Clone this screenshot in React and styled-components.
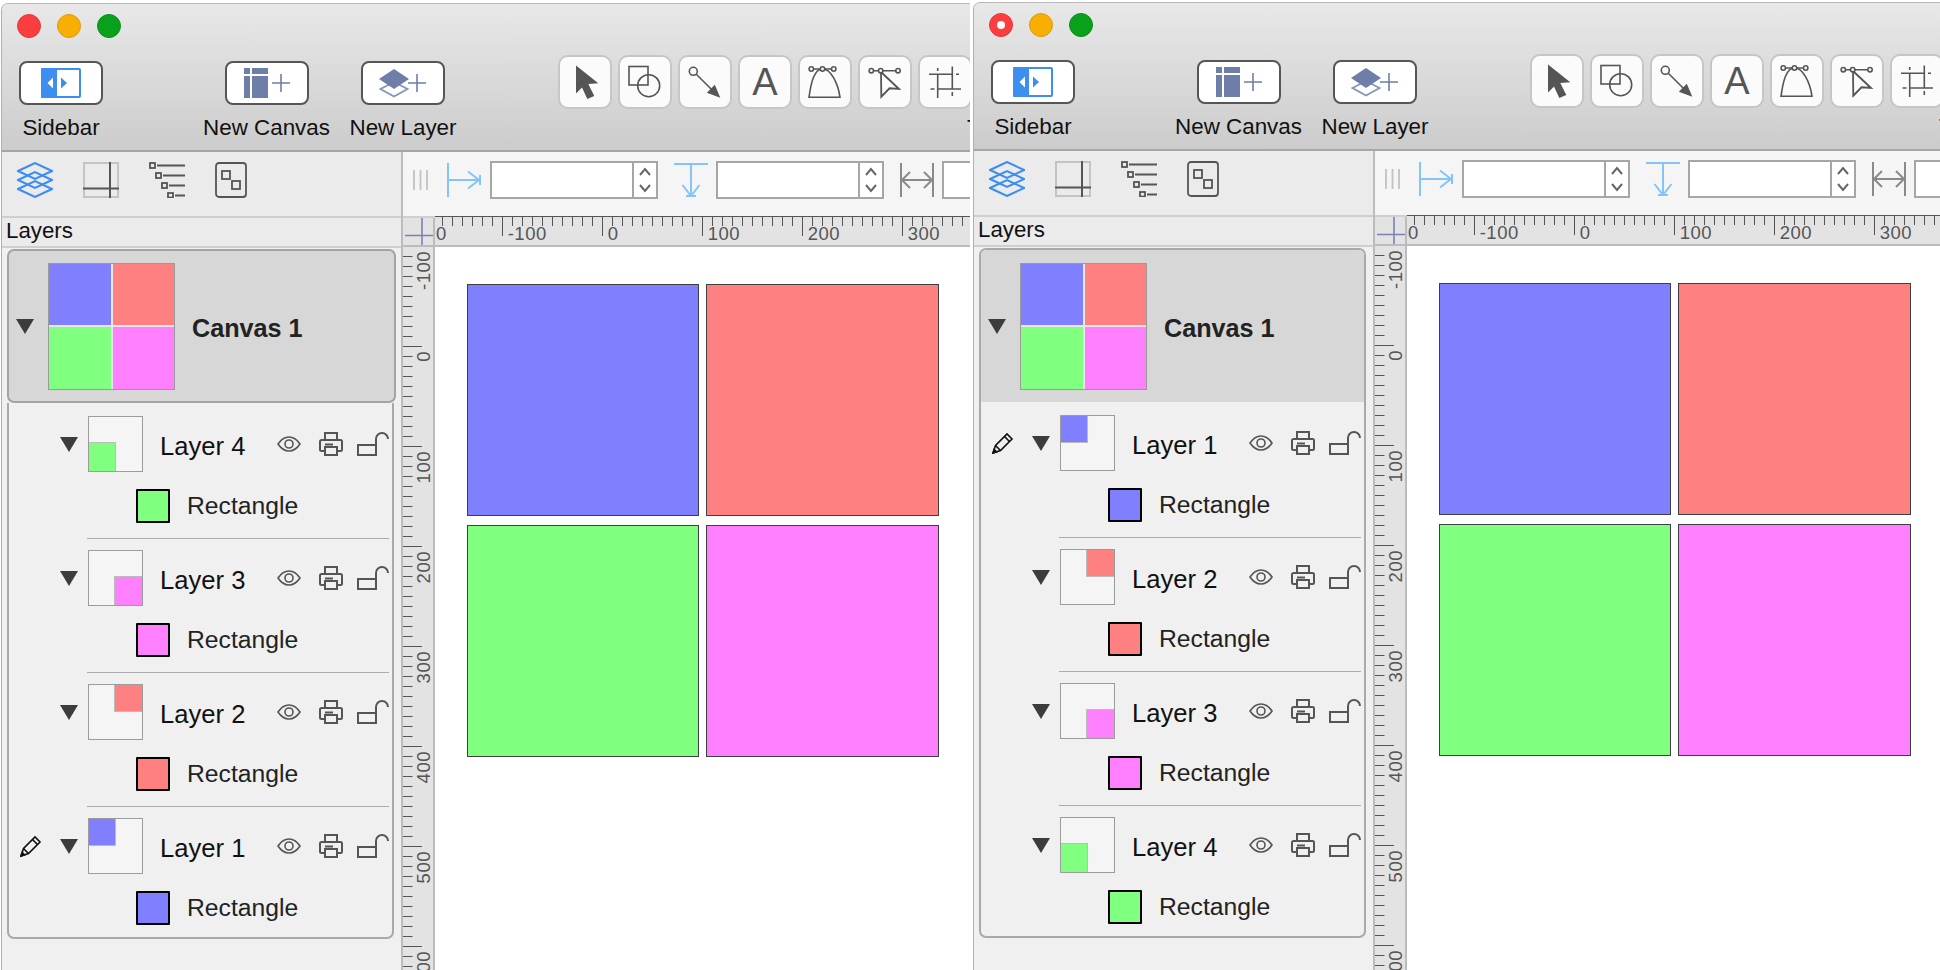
import React from "react";
import styled, { createGlobalStyle } from "styled-components";

const FONT = `"Liberation Sans", Arial, sans-serif`;
const BLUE = "#8080ff";
const RED = "#ff8080";
const GREEN = "#80ff80";
const PINK = "#ff80ff";
const ICON = "#555";

const Global = createGlobalStyle`
  html, body { margin: 0; padding: 0; background: #fff; overflow: hidden; }
  #root { width: 1940px; height: 970px; }
`;

const Page = styled.div`
  display: flex;
  width: 1940px;
  height: 970px;
  overflow: hidden;
  font-family: ${FONT};
`;

const Window = styled.div`
  display: flex;
  flex-direction: column;
  flex: none;
  width: ${(p) => p.$width}px;
  height: ${(p) => 970 - p.$top}px;
  margin: ${(p) => p.$top}px ${(p) => p.$after}px 0 1px;
  border-top: 1px solid #b8b8b8;
  border-left: 1px solid #b0b0b0;
  border-top-left-radius: 7px;
  overflow: hidden;
  background: #f0f0f0;
`;

const TitleBar = styled.div`
  flex: none;
  height: 136px;
  padding: 10px 0 0 15px;
  background: linear-gradient(#e8e8e8, #cccccc);
  border-bottom: 2px solid #a6a6a6;
`;

const Lights = styled.div`
  display: flex;
  gap: 16px;
`;

const Light = styled.div`
  display: flex;
  align-items: center;
  justify-content: center;
  width: 24px;
  height: 24px;
  border-radius: 50%;
  box-sizing: border-box;
  border: 1px solid ${(p) => p.$edge};
  background: ${(p) => p.$color};
`;

const Dot = styled.div`
  width: 8px;
  height: 8px;
  border-radius: 50%;
  background: #fff;
`;

const Toolbar = styled.div`
  display: flex;
  align-items: flex-start;
  margin: 17px 0 0 2px;
`;

const ToolItem = styled.div`
  flex: none;
  display: flex;
  flex-direction: column;
  align-items: center;
  width: ${(p) => p.$width}px;
  margin: 6px 0 0 ${(p) => p.$left}px;
`;

const BigButton = styled.div`
  display: flex;
  align-items: center;
  justify-content: center;
  width: 84px;
  height: 44px;
  box-sizing: border-box;
  border: 2px solid #565656;
  border-radius: 8px;
  background: #fff;
`;

const ToolLabel = styled.div`
  margin-top: 10px;
  font-size: 22.4px;
  line-height: 26px;
  color: #111;
  white-space: nowrap;
`;

const ToolGroup = styled.div`
  flex: none;
  margin-left: 101px;
`;

const ToolRow = styled.div`
  display: flex;
  gap: 6px;
`;

const ClippedLabel = styled(ToolLabel)`
  margin: 6px 0 0 ${(p) => p.$left}px;
  width: 20px;
`;

const ToolButton = styled.div`
  flex: none;
  display: flex;
  align-items: center;
  justify-content: center;
  width: 54px;
  height: 54px;
  box-sizing: border-box;
  border: 2px solid #c6c6c6;
  border-radius: 10px;
  background: #fbfbfb;
  color: ${ICON};
  font-size: 38px;
  line-height: 1;
`;

const Body = styled.div`
  flex: 1;
  display: flex;
  min-height: 0;
`;

const Sidebar = styled.div`
  flex: none;
  display: flex;
  flex-direction: column;
  width: 399px;
  border-right: 2px solid #bcbcbc;
`;

const SideTools = styled.div`
  flex: none;
  display: flex;
  align-items: flex-start;
  gap: 30px;
  box-sizing: border-box;
  height: 66px;
  padding: 10px 0 0 15px;
  background: #ebebeb;
  border-bottom: 2px solid #cfcfcf;
`;

const LayersHeader = styled.div`
  flex: none;
  box-sizing: border-box;
  height: 30px;
  padding-left: 4px;
  background: #ebebeb;
  border-bottom: 2px solid #cfcfcf;
  font-size: 22.3px;
  line-height: 26px;
  color: #111;
`;

const ListFrame = styled.div`
  flex: none;
  box-sizing: border-box;
  width: ${(p) => (p.$split ? 389 : 387)}px;
  margin: 1px 0 0 5px;
  ${(p) =>
    !p.$split &&
    `
    border: 2px solid #a9a9a9;
    border-radius: 7px;
    overflow: hidden;
  `}
`;

const CanvasRow = styled.div`
  display: flex;
  align-items: center;
  box-sizing: border-box;
  height: ${(p) => (p.$split ? 154 : 152)}px;
  padding-left: 7px;
  background: #d7d7d7;
  ${(p) =>
    p.$split &&
    `
    border: 2px solid #a3a3a3;
    border-radius: 7px;
  `}
`;

const Triangle = styled.div`
  flex: none;
  width: 0;
  height: 0;
  border-left: 9px solid transparent;
  border-right: 9px solid transparent;
  border-top: 15px solid #3c3c3c;
`;

const CanvasThumb = styled.div`
  flex: none;
  display: grid;
  grid-template-columns: 1fr 1fr;
  grid-template-rows: 1fr 1fr;
  gap: 2px;
  box-sizing: border-box;
  width: 127px;
  height: 127px;
  margin-left: 14px;
  border: 1px solid #9a9a9a;
  background: #e8e8e8;
`;

const Fill = styled.div`
  background: ${(p) => p.$color};
`;

const CanvasName = styled.div`
  margin: 4px 0 0 17px;
  font-size: 25.2px;
  font-weight: 700;
  color: #222;
  white-space: nowrap;
`;

const LayerList = styled.div`
  box-sizing: border-box;
  padding: 13px 0 12px;
  ${(p) =>
    p.$split &&
    `
    width: 387px;
    border: 2px solid #a9a9a9;
    border-top: none;
    border-bottom-left-radius: 7px;
    border-bottom-right-radius: 7px;
  `}
`;

const LayerHead = styled.div`
  display: flex;
  align-items: center;
  height: 56px;
`;

const PencilSlot = styled.div`
  flex: none;
  display: flex;
  width: 22px;
  height: 22px;
  margin: 0 18px 0 11px;
`;

const LayerThumb = styled.div`
  flex: none;
  display: grid;
  grid-template-columns: 26px 1fr;
  grid-template-rows: 26px 1fr;
  box-sizing: border-box;
  width: 55px;
  height: 56px;
  margin-left: 10px;
  border: 1px solid #9c9c9c;
  background: #f5f5f5;
  overflow: hidden;
`;

const LayerCorner = styled.div`
  grid-column: ${(p) => p.$col};
  grid-row: ${(p) => p.$row};
  background: ${(p) => p.$color};
  box-shadow: 0 0 0 1px rgba(120, 120, 120, 0.45);
`;

const LayerName = styled.div`
  flex: none;
  width: 117px;
  margin: 4px 0 0 17px;
  font-size: 25.6px;
  color: #111;
  white-space: nowrap;
`;

const LayerIcons = styled.div`
  flex: none;
  display: flex;
  align-items: center;
  margin-top: -1px;
`;

const RowIcon = styled.svg`
  flex: none;
  display: block;
  margin-left: ${(p) => p.$left}px;
`;

const SubRow = styled.div`
  display: flex;
  align-items: center;
  height: 34px;
  margin-top: 17px;
  padding-left: 127px;
`;

const Swatch = styled.div`
  flex: none;
  box-sizing: border-box;
  width: 34px;
  height: 34px;
  border: 2px solid #000;
  border-radius: 1px;
  background: ${(p) => p.$color};
`;

const SubName = styled.div`
  margin-left: 17px;
  font-size: 24.7px;
  color: #222;
`;

const Divider = styled.div`
  height: 1px;
  margin: 15px 3px 11px 78px;
  background: #acacac;
`;

const Main = styled.div`
  flex: 1;
  display: flex;
  flex-direction: column;
  min-width: 0;
`;

const Inspector = styled.div`
  flex: none;
  display: flex;
  align-items: center;
  box-sizing: border-box;
  height: 66px;
  padding: 0 0 8px 10px;
  background: #f5f5f5;
  border-bottom: 2px solid #cfcfcf;
`;

const Glyph = styled.svg`
  flex: none;
  display: block;
  margin-left: ${(p) => p.$left || 0}px;
`;

const Field = styled.div`
  flex: none;
  display: flex;
  justify-content: flex-end;
  box-sizing: border-box;
  width: 168px;
  height: 38px;
  margin-left: 8px;
  border: 2px solid #a6a6a6;
  background: #fff;
`;

const Stepper = styled.div`
  display: flex;
  align-items: center;
  justify-content: center;
  width: 22px;
  border-left: 2px solid #a6a6a6;
`;

const RulerTop = styled.div`
  flex: none;
  display: flex;
  height: 29px;
`;

const Corner = styled.div`
  flex: none;
  box-sizing: border-box;
  width: 32px;
  background: #e3e3e3;
  border-right: 2px solid #bcbcbc;
  border-bottom: 2px solid #bcbcbc;
`;

const HorizontalStrip = styled.div`
  flex: 1;
  min-width: 0;
  overflow: hidden;
  box-sizing: border-box;
  height: 31px;
  margin-top: -2px;
  background: #e3e3e3;
  border-bottom: 2px solid #bcbcbc;
`;

const HorizontalTicks = styled.div`
  display: flex;
  width: 800px;
  height: 29px;
  margin-left: -33.3px;
`;

const HorizontalCell = styled.div`
  flex: none;
  box-sizing: border-box;
  width: 100px;
  padding: 8px 0 0 6px;
  background:
    linear-gradient(${ICON}, ${ICON}) 0 0 / 100% 1.4px no-repeat,
    linear-gradient(${ICON}, ${ICON}) 0 0 / 1.4px 20px no-repeat,
    repeating-linear-gradient(to right, ${ICON} 0 1.4px, transparent 1.4px 10px) 0 0 / 100% 10px no-repeat;
  font-size: 18.5px;
  line-height: 20px;
  letter-spacing: 0.5px;
  color: #555;
`;

const RulerBody = styled.div`
  flex: 1;
  display: flex;
  min-height: 0;
`;

const VerticalStrip = styled.div`
  flex: none;
  box-sizing: border-box;
  width: 32px;
  overflow: hidden;
  background: #e3e3e3;
  border-right: 2px solid #bcbcbc;
`;

const VerticalTicks = styled.div`
  margin-top: -1.3px;
`;

const VerticalCell = styled.div`
  display: flex;
  justify-content: flex-end;
  box-sizing: border-box;
  height: 100px;
  padding: 5px 1px 0 0;
  background:
    linear-gradient(${ICON}, ${ICON}) 0 0 / 19px 1.4px no-repeat,
    repeating-linear-gradient(to bottom, ${ICON} 0 1.4px, transparent 1.4px 10px) 0 0 / 9.5px 100% no-repeat;
`;

const VerticalLabel = styled.div`
  writing-mode: vertical-rl;
  transform: rotate(180deg);
  align-self: flex-start;
  font-size: 18.5px;
  line-height: 16px;
  letter-spacing: 0.5px;
  color: #555;
`;

const Canvas = styled.div`
  flex: 1;
  min-width: 0;
  box-sizing: border-box;
  padding: 36.5px 0 0 31.5px;
  background: #fff;
`;

const ShapeGrid = styled.div`
  display: grid;
  grid-template-columns: 232.6px 232.6px;
  grid-template-rows: 232px 232px;
  column-gap: 7.4px;
  row-gap: 9px;
`;

const Shape = styled.div`
  box-sizing: border-box;
  border: 1.5px solid #3f3f3f;
  background: ${(p) => p.$color};
`;

function SidebarIcon() {
  return (
    <svg width="40" height="30" viewBox="0 0 40 30">
      <rect x="1" y="1" width="38" height="28" fill="#fff" stroke="#3c8ef0" strokeWidth="2" rx="1" />
      <rect width="16" height="30" fill="#3c8ef0" rx="1" />
      <path d="M12 9.5v11L6.5 15z" fill="#fff" />
      <path d="M20 9.5v11l6-5.5z" fill="#3c8ef0" />
    </svg>
  );
}

function NewCanvasIcon() {
  return (
    <svg width="46" height="30" viewBox="0 0 46 30">
      <path d="M0 0h6v6H0zM8 0h16v6H8zM0 8h6v22H0zM8 8h16v22H8z" fill="#6d7ea8" />
      <path d="M28 15h18M37 6v18" stroke="#6d7ea8" strokeWidth="1.6" fill="none" />
    </svg>
  );
}

function NewLayerIcon() {
  return (
    <svg width="48" height="30" viewBox="0 0 48 30">
      <path d="M1.5 21L15 14l13.5 7L15 28.5z" fill="none" stroke="#8594b8" strokeWidth="1.8" />
      <path d="M0 11L15 1l15 10-15 10z" fill="#6d7ea8" />
      <path d="M29 15h18M38 6v18" stroke="#6d7ea8" strokeWidth="1.6" fill="none" />
    </svg>
  );
}

function ToolIcon({ kind }) {
  const line = { fill: "none", stroke: ICON, strokeWidth: 1.6 };
  return (
    <svg width="50" height="50" viewBox="2 2 50 50">
      {kind === "arrow" && <path d="M18 10.5l22.3 17.8-10 .7 6 12-7 3-5.3-11.5-6 6z" fill={ICON} />}
      {kind === "shapes" && (
        <g {...line}>
          <rect x="11" y="11.500" width="19" height="18.5" />
          <circle cx="30.7" cy="30.7" r="11" />
        </g>
      )}
      {kind === "line" && (
        <g>
          <circle cx="15.3" cy="16.3" r="4" {...line} />
          <path d="M18.3 19.3l17 17" {...line} />
          <path d="M42.3 42.7l-13.5-5 8-8z" fill={ICON} />
        </g>
      )}
      {kind === "curve" && (
        <g {...line}>
          <path d="M11 42.3C13 28 16 14 24.5 14 33 14 40 28 42 42.3z" />
          <path d="M15 14h19" />
          <circle cx="13.3" cy="14" r="2.2" fill="#fbfbfb" />
          <circle cx="24.5" cy="14" r="2.2" fill="#fbfbfb" />
          <circle cx="35.7" cy="14" r="2.2" fill="#fbfbfb" />
        </g>
      )}
      {kind === "edit" && (
        <g {...line}>
          <path d="M15 15.7h23" />
          <path d="M23 17l18 17-9.5-.7-8.2 8.4z" strokeWidth="1.8" />
          <circle cx="13.3" cy="15.7" r="2.2" fill="#fbfbfb" />
          <circle cx="22.7" cy="15.7" r="2.2" fill="#fbfbfb" />
          <circle cx="40" cy="15.7" r="2.2" fill="#fbfbfb" />
        </g>
      )}
      {kind === "crop" && (
        <path
          d="M11 19.3h23.5M38 19.3h3M12.5 34h4M19.7 34H43M19.7 13v3M19.7 19.3V43M34.3 11.5v22.5M34.3 37v4"
          {...line}
        />
      )}
    </svg>
  );
}

function LayersIcon() {
  return (
    <svg width="36" height="36" viewBox="0 0 36 36" fill="none" stroke="#3b8df5" strokeWidth="2">
      <path d="M1 9l17-8 17 8-17 8z" />
      <path d="M1 18l17-8 17 8-17 8z" />
      <path d="M1 27l17-8 17 8-17 8z" />
    </svg>
  );
}

function GridIcon() {
  return (
    <svg width="36" height="36" viewBox="0 0 36 36" fill="none">
      <rect x="1" y="1" width="34" height="34" stroke="#c4c4c4" strokeWidth="2" />
      <path d="M27 0v36M0 26.500h36" stroke={ICON} strokeWidth="2" />
    </svg>
  );
}

function OutlineIcon() {
  return (
    <svg width="36" height="36" viewBox="0 0 36 36" fill="none" stroke={ICON} strokeWidth="1.8">
      <rect x="1" y="1" width="5" height="5" />
      <rect x="7" y="11" width="5" height="5" />
      <rect x="13" y="21" width="5" height="5" />
      <rect x="19" y="31" width="5" height="4.500" />
      <path d="M8 3.500h28M14 13.500h22M20 23.500h16M26 33.500h10" />
    </svg>
  );
}

function SquaresIcon() {
  return (
    <svg width="32" height="36" viewBox="0 0 32 36" fill="none" stroke={ICON} strokeWidth="1.8">
      <rect x="1" y="1" width="30" height="34" rx="3" />
      <rect x="7" y="9" width="8" height="8" />
      <rect x="17" y="19" width="8" height="8" />
    </svg>
  );
}

function HandleIcon() {
  return (
    <Glyph width="15" height="20" viewBox="0 0 15 20" stroke="#c2c2c2" strokeWidth="1.8">
      <path d="M1 0v20M7.500 0v20M14 0v20" />
    </Glyph>
  );
}

function XIcon() {
  return (
    <Glyph $left={19} width="35" height="34" viewBox="0 0 35 34" fill="none" stroke="#85c4fb" strokeWidth="2">
      <path d="M1 0v34M1 17h32M33 12v10M21 8.500l11 8.500-11 8.500" />
    </Glyph>
  );
}

function YIcon() {
  return (
    <Glyph $left={16} width="34" height="34" viewBox="0 0 34 34" fill="none" stroke="#85c4fb" strokeWidth="2">
      <path d="M0 1h34M17 1v32M12 33h10M8.500 22l8.500 11 8.500-11" />
    </Glyph>
  );
}

function WidthIcon() {
  return (
    <Glyph $left={16} width="34" height="34" viewBox="0 0 34 34" fill="none" stroke="#8a8a8a" strokeWidth="2">
      <path d="M1 0v34M33 0v34M2 17h30M10 9l-8 8 8 8M24 9l8 8-8 8" />
    </Glyph>
  );
}

function Chevrons() {
  return (
    <svg width="14" height="28" viewBox="0 0 14 28" fill="none" stroke="#666" strokeWidth="2">
      <path d="M2 9l5-6 5 6M2 19l5 6 5-6" />
    </svg>
  );
}

function EyeIcon() {
  return (
    <RowIcon $left={0} width="24" height="16" viewBox="0 0 24 16" fill="none" stroke={ICON} strokeWidth="1.6">
      <path d="M1 8c3-4.500 7-7 11-7s8 2.500 11 7c-3 4.500-7 7-11 7S4 12.500 1 8z" />
      <circle cx="12" cy="8" r="4" />
    </RowIcon>
  );
}

function PrinterIcon() {
  return (
    <RowIcon $left={18} width="24" height="24" viewBox="0 0 24 24" fill="none" stroke={ICON} strokeWidth="2">
      <path d="M6 8V1h12v7" />
      <path d="M6 19H2.500A1.500 1.500 0 0 1 1 17.500v-8A1.500 1.500 0 0 1 2.500 8h19A1.500 1.500 0 0 1 23 9.500v8a1.500 1.500 0 0 1-1.500 1.500H18" />
      <path d="M6 15h12v8H6zM6 12.500h8" />
    </RowIcon>
  );
}

function LockIcon() {
  return (
    <RowIcon $left={14} width="32" height="24" viewBox="0 0 32 24" fill="none" stroke={ICON} strokeWidth="2">
      <rect x="1" y="13" width="18" height="10" />
      <path d="M19 13V7a6 6 0 0 1 12 0" />
    </RowIcon>
  );
}

function PencilIcon() {
  return (
    <svg width="22" height="22" viewBox="0 0 22 22" fill="none" stroke="#111" strokeWidth="1.6">
      <path d="M1 21l2.500-7.500L15 2l5 5L8.500 18.500z" />
      <path d="M3.500 13.500l5 5M12.500 4.500l5 5" />
      <path d="M1 21l3.500-1.200-2.300-2.300z" fill="#111" />
    </svg>
  );
}

const TOOLS = ["arrow", "shapes", "line", "text", "curve", "edit", "crop"];
const H_MARKS = [-200, -100, 0, 100, 200, 300];
const V_MARKS = [-100, 0, 100, 200, 300, 400, 500, 600];
const CORNER_SPOT = {
  1: { col: 1, row: 1, color: BLUE },
  2: { col: 2, row: 1, color: RED },
  3: { col: 2, row: 2, color: PINK },
  4: { col: 1, row: 2, color: GREEN },
};

function Layer({ id, last, editing }) {
  const spot = CORNER_SPOT[id];
  return (
    <>
      <LayerHead>
        <PencilSlot>{editing && <PencilIcon />}</PencilSlot>
        <Triangle />
        <LayerThumb>
          <LayerCorner $col={spot.col} $row={spot.row} $color={spot.color} />
        </LayerThumb>
        <LayerName>Layer {id}</LayerName>
        <LayerIcons>
          <EyeIcon />
          <PrinterIcon />
          <LockIcon />
        </LayerIcons>
      </LayerHead>
      <SubRow>
        <Swatch $color={spot.color} />
        <SubName>Rectangle</SubName>
      </SubRow>
      {!last && <Divider />}
    </>
  );
}

function AppWindow({ width, top, after, order, split, focused }) {
  return (
    <Window $width={width} $top={top} $after={after}>
      <TitleBar>
        <Lights>
          <Light $color="#fc3d3f" $edge="#e2393a">{focused && <Dot />}</Light>
          <Light $color="#f8ae02" $edge="#dd9c0c" />
          <Light $color="#09a01b" $edge="#0b9019" />
        </Lights>
        <Toolbar>
          <ToolItem $width={84} $left={0}>
            <BigButton><SidebarIcon /></BigButton>
            <ToolLabel>Sidebar</ToolLabel>
          </ToolItem>
          <ToolItem $width={127} $left={100}>
            <BigButton><NewCanvasIcon /></BigButton>
            <ToolLabel>New Canvas</ToolLabel>
          </ToolItem>
          <ToolItem $width={108} $left={19}>
            <BigButton><NewLayerIcon /></BigButton>
            <ToolLabel>New Layer</ToolLabel>
          </ToolItem>
          <ToolGroup>
            <ToolRow>
              {TOOLS.map((t) => (
                <ToolButton key={t}>{t === "text" ? "A" : <ToolIcon kind={t} />}</ToolButton>
              ))}
            </ToolRow>
            <ClippedLabel $left={409}>T</ClippedLabel>
          </ToolGroup>
        </Toolbar>
      </TitleBar>
      <Body>
        <Sidebar>
          <SideTools>
            <LayersIcon />
            <GridIcon />
            <OutlineIcon />
            <SquaresIcon />
          </SideTools>
          <LayersHeader>Layers</LayersHeader>
          <ListFrame $split={split}>
            <CanvasRow $split={split}>
              <Triangle />
              <CanvasThumb>
                <Fill $color={BLUE} />
                <Fill $color={RED} />
                <Fill $color={GREEN} />
                <Fill $color={PINK} />
              </CanvasThumb>
              <CanvasName>Canvas 1</CanvasName>
            </CanvasRow>
            <LayerList $split={split}>
              {order.map((id, i) => (
                <Layer key={id} id={id} last={i === order.length - 1} editing={id === 1} />
              ))}
            </LayerList>
          </ListFrame>
        </Sidebar>
        <Main>
          <Inspector>
            <HandleIcon />
            <XIcon />
            <Field><Stepper><Chevrons /></Stepper></Field>
            <YIcon />
            <Field><Stepper><Chevrons /></Stepper></Field>
            <WidthIcon />
            <Field />
          </Inspector>
          <RulerTop>
            <Corner>
              <svg width="30" height="27" viewBox="0 0 30 27" stroke="#7b7fb7" strokeWidth="1.6">
                <path d="M2 17.500h28M19 0v27" />
              </svg>
            </Corner>
            <HorizontalStrip>
              <HorizontalTicks>
                {H_MARKS.map((m) => (
                  <HorizontalCell key={m}>{m}</HorizontalCell>
                ))}
              </HorizontalTicks>
            </HorizontalStrip>
          </RulerTop>
          <RulerBody>
            <VerticalStrip>
              <VerticalTicks>
                {V_MARKS.map((m) => (
                  <VerticalCell key={m}>
                    <VerticalLabel>{m}</VerticalLabel>
                  </VerticalCell>
                ))}
              </VerticalTicks>
            </VerticalStrip>
            <Canvas>
              <ShapeGrid>
                <Shape $color={BLUE} />
                <Shape $color={RED} />
                <Shape $color={GREEN} />
                <Shape $color={PINK} />
              </ShapeGrid>
            </Canvas>
          </RulerBody>
        </Main>
      </Body>
    </Window>
  );
}

export default function App() {
  return (
    <Page>
      <Global />
      <AppWindow width={968} top={3} after={2} order={[4, 3, 2, 1]} split />
      <AppWindow width={966} top={2} after={0} order={[1, 2, 3, 4]} focused />
    </Page>
  );
}
